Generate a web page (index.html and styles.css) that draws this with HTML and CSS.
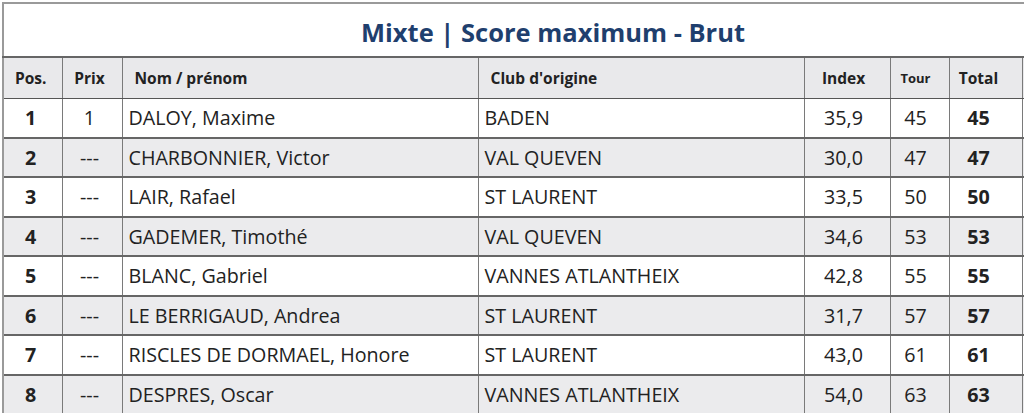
FILE: index.html
```html
<!DOCTYPE html>
<html lang="fr">
<head>
<meta charset="utf-8">
<title>Mixte | Score maximum - Brut</title>
<link rel="stylesheet" href="styles.css">
</head>
<body>
<div class="viewport">
<table class="results">
<colgroup>
<col class="c-pos"><col class="c-prix"><col class="c-nom"><col class="c-club"><col class="c-index"><col class="c-tour"><col class="c-total"><col class="c-extra">
</colgroup>
<thead>
<tr class="title-row"><th colspan="8" class="title">Mixte | Score maximum - Brut</th></tr>
<tr class="head-row">
<th class="center pos">Pos.</th>
<th class="center prix">Prix</th>
<th class="left">Nom / prénom</th>
<th class="left">Club d'origine</th>
<th class="center idx">Index</th>
<th class="center small tour">Tour</th>
<th class="center total">Total</th>
<th></th>
</tr>
</thead>
<tbody>
<tr><td class="center bold pos">1</td><td class="center prix">1</td><td class="left">DALOY, Maxime</td><td class="left">BADEN</td><td class="center idx">35,9</td><td class="center tour">45</td><td class="center bold total">45</td><td></td></tr>
<tr class="alt"><td class="center bold pos">2</td><td class="center prix">---</td><td class="left">CHARBONNIER, Victor</td><td class="left">VAL QUEVEN</td><td class="center idx">30,0</td><td class="center tour">47</td><td class="center bold total">47</td><td></td></tr>
<tr><td class="center bold pos">3</td><td class="center prix">---</td><td class="left">LAIR, Rafael</td><td class="left">ST LAURENT</td><td class="center idx">33,5</td><td class="center tour">50</td><td class="center bold total">50</td><td></td></tr>
<tr class="alt"><td class="center bold pos">4</td><td class="center prix">---</td><td class="left">GADEMER, Timothé</td><td class="left">VAL QUEVEN</td><td class="center idx">34,6</td><td class="center tour">53</td><td class="center bold total">53</td><td></td></tr>
<tr><td class="center bold pos">5</td><td class="center prix">---</td><td class="left">BLANC, Gabriel</td><td class="left">VANNES ATLANTHEIX</td><td class="center idx">42,8</td><td class="center tour">55</td><td class="center bold total">55</td><td></td></tr>
<tr class="alt"><td class="center bold pos">6</td><td class="center prix">---</td><td class="left">LE BERRIGAUD, Andrea</td><td class="left">ST LAURENT</td><td class="center idx">31,7</td><td class="center tour">57</td><td class="center bold total">57</td><td></td></tr>
<tr><td class="center bold pos">7</td><td class="center prix">---</td><td class="left">RISCLES DE DORMAEL, Honore</td><td class="left">ST LAURENT</td><td class="center idx">43,0</td><td class="center tour">61</td><td class="center bold total">61</td><td></td></tr>
<tr class="alt"><td class="center bold pos">8</td><td class="center prix">---</td><td class="left">DESPRES, Oscar</td><td class="left">VANNES ATLANTHEIX</td><td class="center idx">54,0</td><td class="center tour">63</td><td class="center bold total">63</td><td></td></tr>
</tbody>
</table>
</div>
</body>
</html>
```
FILE: styles.css
```css
html, body {
  margin: 0;
  padding: 0;
  background: #fff;
}
body {
  font-family: "Open Sans", "DejaVu Sans", sans-serif;
  color: #222;
}
.viewport {
  width: 1024px;
  height: 416px;
  overflow: hidden;
  padding: 2px 0 0 2px;
  box-sizing: border-box;
}
.results {
  border-collapse: collapse;
  table-layout: fixed;
  width: 1100px;
}
.c-pos { width: 59px; }
.c-prix { width: 60px; }
.c-nom { width: 356px; }
.c-club { width: 326px; }
.c-index { width: 86px; }
.c-tour { width: 59px; }
.c-total { width: 73px; }
.c-extra { width: 81px; }

.title {
  height: 49px;
  padding: 3px 0 0;
  font-size: 25.5px;
  font-weight: 700;
  color: #1f3f6e;
  text-align: center;
  vertical-align: middle;
  border: 2px solid #9a9a9a;
  border-bottom: 2px solid #666;
  background: #fff;
}
.head-row th {
  height: 40px;
  padding: 0;
  background: #e9e9eb;
  font-size: 15.5px;
  font-weight: 700;
  color: #222;
  border-left: 1px solid #7a7a7a;
  border-right: 1px solid #7a7a7a;
  border-bottom: 1px solid #555;
  vertical-align: middle;
}
.head-row th:first-child { border-left: 2px solid #9a9a9a; }
.head-row th.left { text-align: left; padding-left: 12px; }
.head-row th.small { font-size: 13px; }

tbody td {
  height: 37.5px;
  padding: 0;
  font-size: 19.7px;
  border-top: 2px solid #666;
  border-left: 1px solid #7a7a7a;
  border-right: 1px solid #7a7a7a;
  vertical-align: middle;
  background: #fff;
}
tbody tr:first-child td { border-top: 1px solid #555; }
tbody td:first-child { border-left: 2px solid #9a9a9a; }
tbody tr.alt td { background: #ebebed; }
.center { text-align: center; }
tbody td.left { text-align: left; padding-left: 6px; }
.bold { font-weight: 700; }

.results .pos { padding-right: 4px; }
.results .prix { padding-right: 5px; }
.results .idx { padding-right: 7px; }
.results .tour { padding-right: 8px; }
.results .total { padding-right: 14px; }
```
